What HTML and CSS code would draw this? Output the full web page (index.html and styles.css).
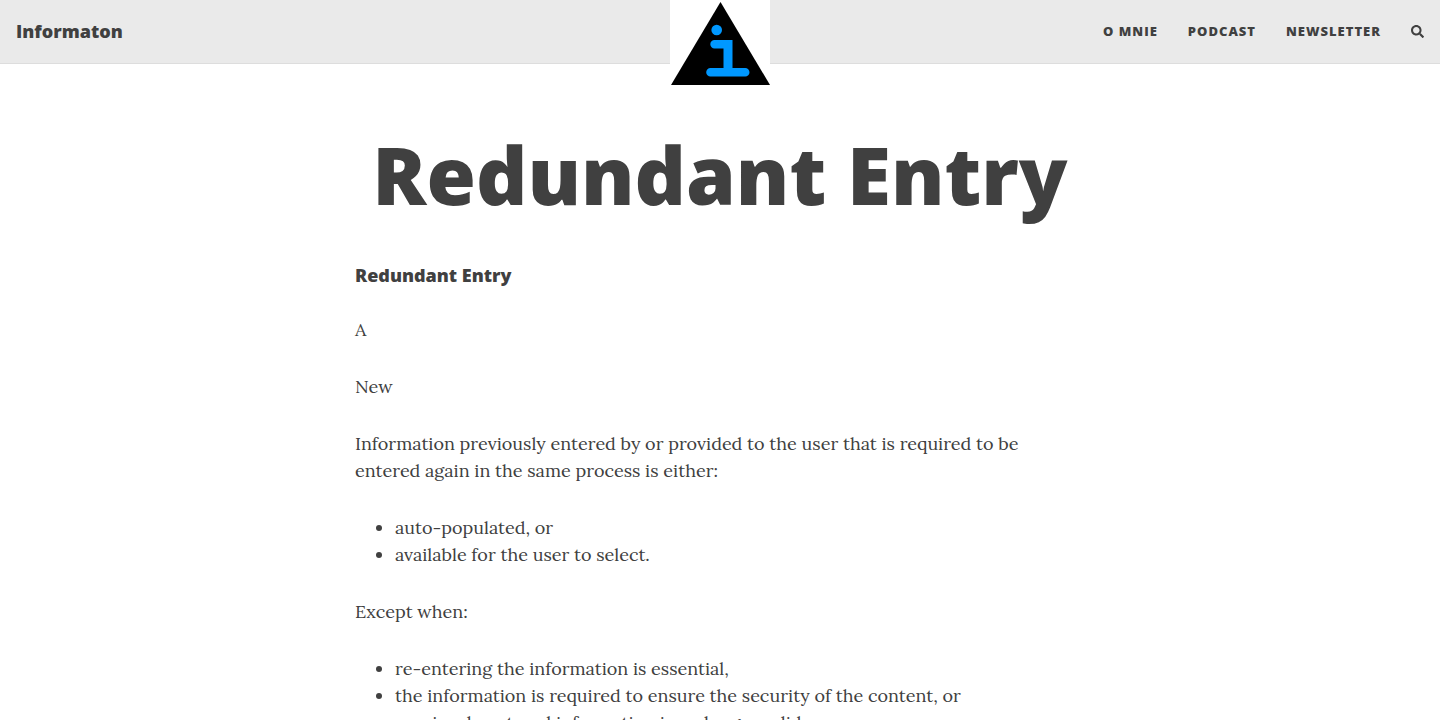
FILE: index.html
```html
<!DOCTYPE html>
<html lang="en">
<head>
<meta charset="utf-8">
<meta name="viewport" content="width=device-width, initial-scale=1">
<title>Redundant Entry</title>
<link rel="stylesheet" href="styles.css">
</head>
<body>
<header class="navbar">
  <a class="brand" href="#">Informaton</a>
  <nav class="menu" aria-label="Main">
    <a class="menu-link" href="#">O mnie</a>
    <a class="menu-link" href="#">Podcast</a>
    <a class="menu-link" href="#">Newsletter</a>
    <button class="search" type="button" aria-label="Search">
      <svg class="search-icon" viewBox="0 0 512 512" aria-hidden="true"><path fill="currentColor" d="M505 442.700 405.300 343c-4.500-4.500-10.600-7-17-7H372c27.600-35.300 44-79.700 44-128C416 93.100 322.900 0 208 0S0 93.100 0 208s93.100 208 208 208c48.300 0 92.700-16.400 128-44v16.300c0 6.400 2.500 12.500 7 17l99.700 99.700c9.400 9.400 24.600 9.400 33.900 0l28.300-28.300c9.400-9.400 9.400-24.600.1-34zM208 336c-70.700 0-128-57.200-128-128 0-70.700 57.200-128 128-128 70.700 0 128 57.200 128 128 0 70.700-57.200 128-128 128z"/></svg>
    </button>
  </nav>
  <a class="avatar" href="#" aria-label="Home">
    <svg class="avatar-image" viewBox="0 0 100 100" aria-hidden="true">
      <rect width="100" height="100" fill="#fff"/>
      <path d="M50.500 2 100 85H1z" fill="#000"/>
      <circle cx="46.700" cy="30" r="5.300" fill="#0098ff"/>
      <path d="M44.500 40H62.500v28H75.200a4.300 4.300 0 0 1 0 8.600H40.500a4.300 4.300 0 0 1 0-8.600H53.500V48.400h-9a4.200 4.200 0 0 1 0-8.400z" fill="#0098ff"/>
    </svg>
  </a>
</header>
<main class="page">
  <h1 class="title">Redundant Entry</h1>
  <article class="content">
    <h2 class="subtitle">Redundant Entry</h2>
    <p>A</p>
    <p>New</p>
    <p>Information previously entered by or provided to the user that is required to be entered again in the same process is either:</p>
    <ul>
      <li>auto-populated, or</li>
      <li>available for the user to select.</li>
    </ul>
    <p>Except when:</p>
    <ul>
      <li>re-entering the information is essential,</li>
      <li>the information is required to ensure the security of the content, or</li>
      <li>previously entered information is no longer valid.</li>
    </ul>
  </article>
</main>
</body>
</html>
```
FILE: styles.css
```css
* {
  box-sizing: border-box;
}

body {
  margin: 0;
  background: #fff;
  color: #404040;
  font-family: Lora, "Liberation Serif", serif;
  font-size: 18px;
  line-height: 27px;
}

.navbar {
  position: relative;
  display: flex;
  align-items: center;
  justify-content: space-between;
  padding: 18px 16px;
  background: #eaeaea;
  border-bottom: 1px solid #ddd;
  font-family: "Open Sans", sans-serif;
  font-weight: 800;
}

.brand,
.menu-link {
  color: inherit;
  text-decoration: none;
}

.brand {
  font-size: 18px;
}

.menu {
  display: flex;
  align-items: center;
  gap: 30px;
}

.menu-link {
  font-size: 13px;
  letter-spacing: 1px;
  text-transform: uppercase;
}

.search {
  display: flex;
  padding: 0;
  border: 0;
  background: none;
  color: inherit;
}

.search-icon {
  width: 13px;
  height: 13px;
}

.avatar {
  position: absolute;
  top: 0;
  left: 50%;
  width: 100px;
  margin-left: -50px;
}

.avatar-image {
  display: block;
  width: 100%;
}

.page {
  max-width: 760px;
  margin: 0 auto;
  padding: 66px 15px 0;
}

.title {
  margin: 0 0 47px;
  font: 800 80px/88px "Open Sans", sans-serif;
  text-align: center;
}

.subtitle {
  margin: 0 0 31px;
  font: 800 18px/20px "Open Sans", sans-serif;
}

.content p,
.content ul {
  margin: 0 0 30px;
}

.content ul {
  padding-left: 40px;
}
```
